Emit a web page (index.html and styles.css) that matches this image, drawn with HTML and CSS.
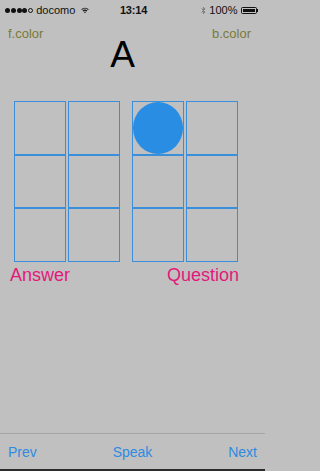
FILE: index.html
```html
<!DOCTYPE html>
<html>
<head>
<meta charset="utf-8">
<link rel="stylesheet" href="styles.css">
</head>
<body>
<div class="screen">
  <div class="status">
    <div class="st-left">
      <span class="dots"><i></i><i></i><i></i><i></i><i class="empty"></i></span>
      <span class="carrier">docomo</span>
      <svg class="wifi" width="8" height="7" viewBox="0 0 8 7">
        <path d="M0.2 2.2 A5.5 5.5 0 0 1 7.8 2.2 L7 3 A4.4 4.4 0 0 0 1 3 Z" fill="#111"/>
        <path d="M1.6 3.6 A3.5 3.5 0 0 1 6.4 3.6 L5.6 4.4 A2.4 2.4 0 0 0 2.4 4.4 Z" fill="#111"/>
        <path d="M3 5 A1.4 1.4 0 0 1 5 5 L4 6.3 Z" fill="#111"/>
      </svg>
    </div>
    <div class="time">13:14</div>
    <div class="st-right">
      <svg class="bt" width="5" height="9" viewBox="0 0 5 9">
        <path d="M0.5 2.5 L4 6 L2.4 7.8 L2.4 1.2 L4 3 L0.5 6.5" fill="none" stroke="#777" stroke-width="0.9"/>
      </svg>
      <span class="pct">100%</span>
      <span class="battery"><span class="fill"></span></span><span class="tip"></span>
    </div>
  </div>

  <div class="header">
    <span class="fcolor">f.color</span>
    <span class="bcolor">b.color</span>
  </div>
  <div class="letter">A</div>

  <div class="grids">
    <div class="grid">
      <div class="cell"></div><div class="cell"></div>
      <div class="cell"></div><div class="cell"></div>
      <div class="cell"></div><div class="cell"></div>
    </div>
    <div class="grid">
      <div class="cell"><div class="dot"></div></div><div class="cell"></div>
      <div class="cell"></div><div class="cell"></div>
      <div class="cell"></div><div class="cell"></div>
    </div>
  </div>

  <div class="labels">
    <span class="label">Answer</span>
    <span class="label">Question</span>
  </div>

  <div class="spacer"></div>

  <div class="toolbar">
    <span class="tb">Prev</span>
    <span class="tb">Speak</span>
    <span class="tb">Next</span>
  </div>
</div>
</body>
</html>
```

FILE: styles.css
```css
* { box-sizing: border-box; }
html, body {
  margin: 0;
  padding: 0;
  background: #c0c0c0;
}
.screen {
  width: 265px;
  height: 471px;
  display: flex;
  flex-direction: column;
  font-family: "Liberation Sans", Arial, sans-serif;
  background: #c0c0c0;
  overflow: hidden;
}
.status {
  height: 20px;
  display: flex;
  align-items: center;
  justify-content: space-between;
  padding: 0 7px 0 5px;
  font-size: 11px;
  color: #111;
  position: relative;
}
.st-left, .st-right {
  display: flex;
  align-items: center;
}
.dots {
  display: flex;
  gap: 0.8px;
  margin-right: 3px;
}
.dots i {
  display: block;
  width: 5px;
  height: 5px;
  border-radius: 50%;
  background: #111;
}
.dots i.empty {
  background: transparent;
  border: 0.8px solid #111;
}
.carrier { margin-right: 6px; }
.time {
  position: absolute;
  left: 0;
  right: 0;
  text-align: center;
  font-weight: bold;
  font-size: 11px;
  letter-spacing: -0.2px;
  padding-left: 2px;
  pointer-events: none;
}
.bt { margin-right: 3px; }
.pct { margin-right: 3px; }
.battery {
  width: 16px;
  height: 7px;
  border: 1px solid #111;
  border-radius: 1.5px;
  padding: 1px;
  display: flex;
}
.battery .fill {
  flex: 1;
  background: #111;
}
.tip {
  width: 1.5px;
  height: 3px;
  background: #111;
}
.header {
  display: flex;
  justify-content: space-between;
  padding: 6px 14px 0 8px;
  font-size: 13px;
  line-height: 15px;
  color: #7a7a36;
}
.letter {
  margin-top: -5px;
  font-size: 37px;
  line-height: 37px;
  text-align: center;
  padding-right: 20px;
  color: #000;
}
.grids {
  margin-top: 28px;
  display: flex;
  gap: 12px;
  padding-left: 14px;
}
.grid {
  display: grid;
  grid-template-columns: 52px 52px;
  grid-template-rows: repeat(3, 53.5px);
  column-gap: 2px;
}
.cell {
  border: 1px solid #3a8fdb;
  padding: 0;
}
.dot {
  width: 100%;
  height: 100%;
  border-radius: 50%;
  background: #2a8de4;
}
.labels {
  display: flex;
  justify-content: space-between;
  padding: 3px 26px 0 10px;
  font-size: 18px;
  line-height: 21px;
  color: #e2197b;
}
.spacer { flex: 1; }
.toolbar {
  height: 38px;
  border-top: 1px solid #a6a6a6;
  border-bottom: 2px solid #2b2b2b;
  display: flex;
  justify-content: space-between;
  padding: 10px 8px 0 8px;
  font-size: 14px;
  line-height: 16px;
  color: #2d8be0;
}
```
